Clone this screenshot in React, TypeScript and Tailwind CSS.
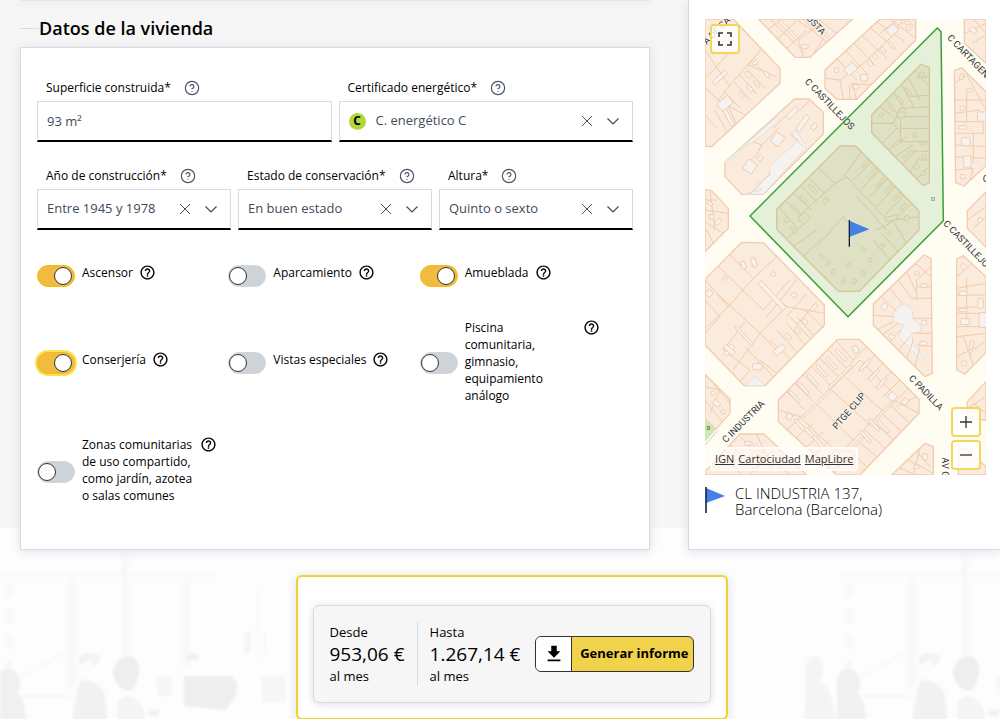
import React, { useState } from 'react';
import { HelpCircle } from 'lucide-react';
import { MdDownload, MdHelpOutline } from 'react-icons/md';
import clsx from 'clsx';

type Box = [number, number, number, number, number];

const toggles = [
  { id: 'ascensor', label: 'Ascensor', on: true },
  { id: 'aparcamiento', label: 'Aparcamiento', on: false },
  { id: 'amueblada', label: 'Amueblada', on: true },
  { id: 'conserjeria', label: 'Conserjería', on: true, active: true },
  { id: 'vistas', label: 'Vistas especiales', on: false },
  { id: 'piscina', label: 'Piscina comunitaria, gimnasio, equipamiento análogo', on: false, width: 'w-28' },
  { id: 'zonas', label: 'Zonas comunitarias de uso compartido, como jardín, azotea o salas comunes', on: false, width: 'w-28' },
];

// City blocks, drawn in map units (3 per pixel)
const blocks = [
  '45,57 130,57 270,205 270,250 65,440 45,440',
  '205,57 488,57 360,172 315,172',
  '405,210 570,57 677,57 677,120 500,298 440,298 405,265',
  '105,487 313,297 358,297 400,337 400,402 220,583 155,583 105,530',
  '545,345 693,193 718,202 718,548 700,557 545,398',
  '260,628 450,438 497,438 687,632 687,690 508,874 445,874 260,688',
  '823,57 888,57 888,190 823,130',
  '793,212 815,203 888,275 888,497 822,558 797,548',
  '888,575 832,632 832,685 888,742',
  '45,568 65,572 115,625 115,685 45,755',
  '45,838 155,727 220,728 403,915 403,975 225,1157 163,1157 45,1035',
  '265,1200 443,1018 507,1018 687,1198 687,1240 510,1425 440,1425 265,1265',
  '550,912 702,765 723,775 727,1120 705,1130 550,975',
  '800,777 820,767 888,830 888,1058 825,1122 800,1110',
  '45,1123 120,1198 120,1240 77,1288 45,1256',
  '45,1415 150,1302 222,1302 350,1425 45,1425',
  '605,1425 705,1330 730,1340 730,1425',
  '832,1205 888,1145 888,1260 832,1255',
  '805,1350 825,1345 888,1400 888,1425 805,1425',
];

const parcels = [
  // top left
  'M45 150L118 258L212 150M75 205L45 235M118 258L85 300L45 262M85 300L165 345M100 270L150 325M132 245L180 300M150 225L200 283M170 205L225 265M190 185L245 240M212 150L175 195L262 232M150 120L75 205M45 345L80 385M75 330L110 395M110 310L140 372',
  // top
  'M235 88L275 57M262 117L320 62M290 145L350 90M340 172L325 120L385 75M320 57L410 125M340 57L375 95M385 57L440 100M240 57L345 160M370 160L400 118',
  // north block
  'M440 175L500 240M465 150L535 225M490 128L560 200M515 105L590 175M540 82L620 150M560 65L645 125M405 235L450 240L460 298M450 240L520 190L600 115L640 57M480 298L478 255M500 298L485 250L540 255M600 57L677 115M570 100L625 57M650 57L677 85',
  // public building
  'M190 425L215 435L270 380M215 435L200 465L160 500M300 400L340 440M240 520L180 582M360 300L330 330M290 345L250 385',
  // triangular block inside the selected area
  'M570 320L610 350M590 300L625 345M612 278L645 330M635 255L670 318M655 235L690 300M675 213L718 260M718 230L680 232M718 285L660 290M718 320L630 325L610 370L545 370M718 350L632 350M632 385H718M632 350V425H718M610 370L632 400M718 455L660 452M575 430L620 385M595 450L650 410M615 470L670 435M637 492L680 450M660 515L690 470M680 537L718 500M718 480H690',
  // main selected block
  'M355 532L405 582M330 555L385 610M310 580L365 630M288 603L345 655M270 625L325 690M385 505L435 550L470 530L600 670L560 690M435 550L325 650M515 455L460 530M545 485L490 540M570 510L515 565M595 535L540 590M617 560L560 620M642 585L585 645M665 612L600 670M687 650L610 660M290 715L350 665M310 740L380 690M340 770L400 710M600 780L550 720M625 755L575 700M650 730L610 665M500 590L590 690M380 740L460 650L470 665',
  // right side
  'M850 57L888 100M823 100L888 70M845 130L888 105M793 250L830 225L888 330M793 300H888M793 340L870 330M793 365H880V400H793M793 435L888 440M793 470L888 475M793 510L850 505M850 505L840 540M830 270V365M850 400V490M832 660L888 620M850 685L888 650',
  // left
  'M45 600L80 600M45 630L115 640M60 572L75 690M45 665L100 700M70 730L50 690',
  // west block
  'M85 800L220 930L300 840M120 765L190 835L260 770M190 835L115 920L45 840M115 920L45 985M80 880L210 1000L130 1110M165 965L100 1050M210 1000L290 920L403 940M260 1050L210 1000M290 920L240 880M320 840L230 950M350 880L290 950M380 905L320 975M45 900L90 950L45 1000M210 1080L260 1120M260 990L320 1055M290 970L345 1035M240 1020L300 1075M165 1040L250 1130M320 950L370 1005M345 930L403 985M100 1050L180 1110L150 1145M360 1015L300 950',
  // passage block
  'M290 1175L345 1230M315 1150L370 1205M340 1125L395 1180M365 1100L420 1155M390 1075L445 1130M415 1050L470 1105M440 1025L490 1080M340 1250L510 1080L620 1190L450 1360M380 1212L490 1320M425 1170L540 1275M465 1130L580 1235M265 1230L330 1250L390 1310L450 1360M530 1040L480 1090M555 1065L505 1115M580 1090L530 1140M605 1115L555 1165M630 1140L580 1190M655 1165L600 1220M680 1190L620 1220M687 1240L610 1200M660 1270L600 1215M635 1295L575 1240M610 1320L550 1265M585 1345L525 1290M560 1370L500 1320M530 1400L470 1345M290 1290L345 1240M315 1315L370 1270M345 1345L400 1295M370 1370L420 1320M400 1395L440 1345M430 1420L470 1370',
  // south east blocks
  'M575 890L620 935M600 865L640 915M625 840L665 895M650 815L680 880M675 790L723 830M723 800L680 840V900M680 860H723M665 895H723M550 945L610 950M560 990L610 965M575 1005L625 970M600 1025L630 990M625 1050L660 1010M650 1075L670 1020M675 1100L690 1040M670 955H727M670 1000H727M680 1035L727 1040M800 830L845 790M800 865L888 850M800 885H888M800 925L860 920M800 940H888M800 980H888M800 1010L888 1000M830 830V980M820 1010L850 1095M800 1070L860 1040M888 1020L840 1060',
  // south blocks
  'M45 1160L90 1170L60 1240M70 1150L120 1210M45 1200L95 1265M95 1360L150 1420M120 1335L200 1415M150 1310L250 1410M200 1302L230 1370L180 1425M230 1370L300 1425M260 1340L200 1400M630 1405L680 1425M655 1380L730 1420M680 1355L720 1400M690 1345L670 1425M832 1225L888 1190M850 1210L888 1240',
];

const courts: Box[] = [
  [90, 232, 52, 12, -42], [112, 345, 12, 70, -28], [105, 310, 42, 28, -40],
  [196, 188, 18, 9, -40], [175, 225, 10, 22, -40], [200, 252, 8, 24, -40], [180, 265, 10, 22, -40], [230, 222, 10, 18, -40], [155, 285, 9, 20, -40],
  [280, 75, 34, 9, 45], [310, 105, 34, 9, 45], [345, 140, 18, 12, 0], [395, 90, 60, 7, 50],
  [607, 90, 30, 26, -40], [482, 207, 34, 26, -40], [522, 233, 20, 20, 0], [498, 260, 15, 13, 30], [555, 170, 10, 18, -40], [580, 150, 8, 20, -40], [605, 135, 8, 22, -40], [540, 190, 10, 18, -40], [655, 82, 10, 18, 0], [440, 210, 12, 14, 0], [640, 65, 12, 10, 0],
  [308, 338, 14, 42, 45], [338, 370, 15, 54, 35], [263, 418, 30, 34, 35], [180, 500, 32, 34, 35], [210, 475, 12, 16, 35], [372, 380, 14, 20, 35],
  [850, 90, 22, 14, 40], [827, 425, 26, 24, 0], [832, 485, 22, 34, 0], [815, 230, 10, 18, 20], [840, 270, 14, 9, 40], [818, 325, 15, 12, 0], [818, 382, 22, 10, 0], [818, 530, 14, 12, 0], [875, 350, 25, 28, 0],
  [247, 887, 14, 110, -43], [162, 1007, 8, 75, -43], [192, 787, 14, 28, -20], [160, 795, 14, 22, -20], [58, 880, 18, 18, 40], [118, 1050, 16, 36, 40], [118, 1050, 36, 14, 40], [202, 1100, 28, 18, 0], [268, 1050, 36, 18, -40], [312, 885, 14, 14, 30], [250, 822, 12, 12, 30], [105, 835, 12, 10, 30], [345, 965, 12, 18, -40], [372, 922, 10, 24, 40], [295, 1010, 10, 20, -40], [322, 992, 10, 20, -40],
  [313, 1190, 9, 45, -42], [340, 1165, 9, 45, -42], [368, 1140, 9, 45, -42], [395, 1113, 9, 45, -42], [425, 1090, 9, 45, -42], [453, 1065, 9, 45, -42],
  [380, 1210, 110, 7, -45], [450, 1130, 95, 7, -45], [525, 1095, 9, 42, 42], [552, 1125, 9, 42, 42], [575, 1150, 9, 42, 42], [607, 1190, 22, 22, 40],
  [575, 1240, 100, 7, -45], [580, 1280, 9, 45, -42], [553, 1275, 9, 45, -42], [527, 1310, 9, 45, -42], [330, 1275, 9, 45, -42], [360, 1300, 9, 45, -42], [385, 1325, 9, 45, -42], [495, 1335, 70, 7, -45], [645, 1205, 16, 18, 30], [497, 1048, 16, 22, -20], [298, 1250, 16, 18, 30],
  [702, 857, 18, 12, 0], [702, 968, 16, 14, 0], [700, 1030, 20, 12, 0], [605, 1010, 16, 14, 40], [583, 920, 16, 18, 40], [680, 820, 14, 9, 0], [820, 880, 24, 12, 0], [825, 965, 26, 18, 0], [878, 960, 22, 44, 0], [820, 800, 18, 12, 40], [820, 930, 24, 10, 0], [845, 1035, 10, 26, 20], [822, 1090, 14, 14, 0], [872, 910, 16, 30, 0],
  [80, 1210, 22, 14, 40], [70, 1180, 14, 10, 40], [100, 1235, 12, 12, 40], [175, 1330, 22, 10, 0], [205, 1345, 36, 8, 45], [140, 1360, 34, 8, -45], [255, 1385, 34, 8, -45], [705, 1370, 14, 18, 0], [680, 1400, 16, 10, 0],
  [65, 650, 14, 12, 0], [85, 665, 12, 20, 40], [60, 610, 16, 10, 40], [870, 660, 12, 14, 30],
];

// Courtyards of the blocks inside the selected area
const selectedCourts: Box[] = [
  [368, 567, 10, 32, -45], [342, 600, 8, 32, -45], [315, 628, 8, 32, -45], [407, 602, 14, 16, 40], [342, 655, 30, 26, -40], [290, 660, 12, 16, 40], [310, 690, 28, 8, 45],
  [525, 490, 8, 28, 45], [548, 520, 8, 36, 45], [570, 548, 8, 36, 45], [597, 565, 8, 32, 45], [620, 590, 8, 32, 45], [640, 620, 9, 26, 45], [605, 655, 36, 14, -15], [650, 655, 14, 16, 30],
  [695, 225, 12, 18, 20], [675, 405, 12, 12, 0], [700, 430, 18, 9, 0], [702, 470, 14, 10, 0], [680, 500, 14, 16, 30], [635, 345, 24, 18, 0], [605, 325, 8, 22, -40], [630, 300, 8, 26, -40], [655, 275, 8, 26, -40], [575, 345, 14, 10, -40], [620, 430, 8, 24, 45], [650, 465, 8, 24, 45], [700, 520, 12, 14, 0],
  [430, 815, 10, 14, 30], [460, 845, 10, 12, 30], [493, 845, 10, 14, 30], [475, 795, 10, 14, 30], [520, 820, 10, 14, 30], [540, 780, 10, 14, 30], [395, 770, 14, 8, 40], [575, 740, 10, 20, 45], [520, 750, 16, 10, 40], [600, 700, 12, 8, 40], [415, 790, 10, 14, 30],
];

function Court({ box }: { box: Box }) {
  const [x, y, w, h, angle] = box;
  return <rect x={x - w / 2} y={y - h / 2} width={w} height={h} rx="2" transform={`rotate(${angle} ${x} ${y})`} />;
}

function CityMap() {
  return (
    <svg viewBox="45 57 843 1368" preserveAspectRatio="xMidYMid slice" className="block h-[456px] w-full bg-[#fffdf2]" role="img" aria-label="Mapa">
      <g fill="#faebdc" stroke="#f0ccb0" strokeWidth="4" strokeLinejoin="round">
        {blocks.map((points) => <polygon key={points} points={points} />)}
      </g>
      <g fill="#f4f3f2" stroke="#dcd8d4" strokeWidth="2">
        <path d="M105 487L262 350L270 360L195 422L175 432L110 492Z" />
        <path d="M350 440L220 583H160L215 570L200 552L240 525V500L325 420L305 405L318 392Z" />
        <path d="M163 1157L195 1130L225 1157Z" />
        <path d="M610 935L640 910L665 925L670 960L690 975L695 995L665 1000L668 1030L700 1075L695 1083L625 1010L640 975L610 965Z" />
      </g>
      <path d="M45 1260L77 1290L45 1325Z" fill="#cfe5b4" />
      <path d="M45 1335L85 1290" stroke="#c9c9c9" strokeWidth="3" />
      <path d={parcels.join('')} fill="none" stroke="#f4cbab" strokeWidth="3" />
      <g fill="#f5f2f0" stroke="#efc6a6" strokeWidth="2.4">
        {courts.map((box, i) => <Court key={i} box={box} />)}
      </g>
      <g fill="#f7ead9" stroke="#eccfae" strokeWidth="2.4">
        {selectedCourts.map((box, i) => <Court key={i} box={box} />)}
      </g>
      <rect x="724" y="592" width="10" height="10" fill="#ddd" stroke="#aaa" strokeWidth="2" />
      <g fill="#2f3138" fontFamily="Roboto, 'Liberation Sans', sans-serif" fontSize="28" stroke="#fffdf2" strokeWidth="4" paintOrder="stroke">
        <text transform="translate(50 135) rotate(-45)">A DE CA</text>
        <text transform="translate(335 42) rotate(47)">COSTA</text>
        <text transform="translate(343 247) rotate(46)">C CASTILLEJOS</text>
        <text transform="translate(770 115) rotate(46)">C CARTAGENA</text>
        <text transform="translate(758 672) rotate(46)">C CASTILLEJOS</text>
        <text transform="translate(655 1136) rotate(46)">C PADILLA</text>
        <text transform="translate(440 1290) rotate(-49)">PTGE CLIP</text>
        <text transform="translate(108 1330) rotate(-45)">C INDUSTRIA</text>
        <text transform="translate(757 1372) rotate(90)">AV GAUDI</text>
        <text transform="translate(878 545)">C</text>
      </g>
      <text x="49" y="1290" fill="#3f7d3a" fontFamily="Roboto, sans-serif" fontSize="22">a</text>
      <polygon points="742,84 753,95 760,662 474,950 180,648" fill="#229922" fillOpacity=".12" stroke="#3a9e35" strokeWidth="4.5" strokeLinejoin="round" />
      <path d="M478 662L538 688L478 711Z" fill="#4480e8" />
      <path d="M478 660V740" stroke="#14233c" strokeWidth="4" />
    </svg>
  );
}

// Soft office photo behind the lower part of the page, repeated sideways
function OfficeBackdrop() {
  return (
    <div className="absolute inset-x-0 bottom-0 -z-10 h-48 overflow-hidden bg-[#fdfdfd]" aria-hidden="true">
      <svg className="h-48 w-full blur-[1px]">
        <defs>
          <g id="office">
            <path d="M0 47H215M70 60V175M258 60V130M186 55V140" stroke="#f9f9f9" strokeWidth="3" />
            <path d="M125 25V130M72 50V160M187 50V140" stroke="#f8f8f8" strokeWidth="7" />
            <path d="M9 55V150" stroke="#f8f8f8" strokeWidth="7" strokeDasharray="14 12" />
            <path d="M0 168H70M20 150L64 125M250 105V125M265 105V125" stroke="#f7f7f7" strokeWidth="2" />
            <path d="M-3 191V155Q-2 141 8 140Q20 142 20 156L18 166Q26 175 26 192Z" fill="#f0f0f0" />
            <path d="M-36 192L-34 160Q-38 130 -26 128Q-15 130 -17 145L-20 152Q-8 160 -4 192Z" fill="#f4f4f4" />
            <path d="M78 130Q82 124 92 125Q101 126 100 133L94 138L90 131L80 138Z" fill="#f3f3f3" />
            <path d="M72 192Q78 152 82 152Q94 150 104 164L108 192Z" fill="#f1f1f1" />
            <path d="M113 144Q116 128 130 128Q140 130 139 146Q136 158 132 162L124 162Q113 155 113 144Z" fill="#eeeeee" />
            <path d="M117 192L118 174Q130 160 144 180V192Z" fill="#f4f4f4" />
            <path d="M184 148H232L237 155L236 168L226 182L184 178Z" fill="#eeeeee" />
            <path d="M187 128Q192 122 198 128V132H188ZM148 182H160L158 188H150Z" fill="#f0f0f0" />
            <path d="M244 104H250V126H244ZM262 148H285V174H262ZM156 148H172V168H158Z" fill="#f6f6f6" />
          </g>
        </defs>
        <use href="#office" />
        <use href="#office" x="840" />
      </svg>
    </div>
  );
}

function FieldLabel({ id, children }: { id: string; children: React.ReactNode }) {
  return (
    <div className="flex h-5 items-center gap-[13px] pl-[9px]">
      <label htmlFor={id} className="text-[12px] leading-5 font-medium text-black">{children}</label>
      <button type="button" aria-label="Ayuda" className="text-[#4b5563]">
        <HelpCircle className="size-4" strokeWidth={1.75} />
      </button>
    </div>
  );
}

function SelectField({ id, label, options, badge }: { id: string; label: string; options: string[]; badge?: string }) {
  const [value, setValue] = useState(options[0]);

  return (
    <div className="flex flex-1 flex-col gap-[3px]">
      <FieldLabel id={id}>{label}</FieldLabel>
      <div className="flex h-[41px] items-center border border-b-2 border-[#d8dce2] border-b-black bg-white pr-[13px] pl-[9px] text-[#414b5a]">
        {badge && (
          <span className="mr-2.5 flex size-[17px] items-center justify-center rounded-full bg-[#b0d83c] text-[12px] leading-none font-bold text-black">{badge}</span>
        )}
        <select id={id} value={value} onChange={(e) => setValue(e.target.value)} className="min-w-0 flex-1 appearance-none bg-transparent text-[13px] outline-none">
          <option value="" />
          {options.map((o) => <option key={o}>{o}</option>)}
        </select>
        <button type="button" aria-label="Borrar" onClick={() => setValue('')} className="mr-3.5">
          <svg viewBox="0 0 12 12" className="size-3" fill="none" stroke="currentColor"><path d="M1 1L11 11M11 1L1 11" /></svg>
        </button>
        <svg viewBox="0 0 12 12" className="size-3" fill="none" stroke="currentColor" strokeWidth="1.2"><path d="M.5 3.5L6 9L11.5 3.5" /></svg>
      </div>
    </div>
  );
}

function Toggle({ id, label, on, active, width }: { id: string; label: string; on: boolean; active?: boolean; width?: string }) {
  const [checked, setChecked] = useState(on);

  return (
    <div className="flex items-center">
      <div className="flex shrink-0 pt-[3px]">
        <input
          id={id}
          type="checkbox"
          checked={checked}
          onChange={(e) => setChecked(e.target.checked)}
          className={clsx(
            'h-[22px] w-[38px] appearance-none rounded-full border border-[#d3d7dc] bg-[#ced3d8] outline-none',
            'before:mt-px before:block before:size-[18px] before:rounded-full before:border before:border-[#333] before:bg-white',
            'checked:border-[#f5b913] checked:bg-[#f1bb40] checked:before:translate-x-4',
            active && 'ring-2 ring-[#fde05a]'
          )}
        />
      </div>
      <div className="flex items-start gap-1.5 pl-[7px]">
        <label htmlFor={id} className={clsx('text-[12px] leading-[17px] font-medium text-black', width)}>{label}</label>
        <button type="button" aria-label="Ayuda" className="shrink-0 pb-1">
          <MdHelpOutline className="size-[17px]" />
        </button>
      </div>
    </div>
  );
}

function Price({ title, amount }: { title: string; amount: string }) {
  return (
    <div>
      <p className="text-[13px] leading-5">{title}</p>
      <p className="text-[19px] leading-6">{amount}</p>
      <p className="text-[13px] leading-5">al mes</p>
    </div>
  );
}

export default function App() {
  return (
    <main className="relative isolate min-h-screen overflow-hidden bg-[#f6f6f6] font-['Open_Sans','Noto_Sans',sans-serif] text-black">
      <OfficeBackdrop />

      <div className="flex gap-[38px] pl-5">
        <section className="flex min-w-0 flex-1 flex-col">
          <div className="h-px bg-[#e4e6ee] shadow-[0_2px_6px_#c5cbdd]" />
          <h2 className="mt-[15px] mb-[7px] flex items-center text-lg leading-6 font-semibold">
            <span className="h-px w-[19px] bg-[#dcdcdc]" />
            Datos de la vivienda
          </h2>

          <form className="flex-1 border border-[#d8dce0] bg-white px-4 pt-[30px] pb-11 shadow-[0_1px_10px_#dadfe9]">
            <div className="flex gap-[7px]">
              <div className="flex flex-1 flex-col gap-[3px]">
                <FieldLabel id="superficie">Superficie construida*</FieldLabel>
                <input id="superficie" defaultValue="93 m²" className="h-[41px] w-full border border-b-2 border-[#d8dce2] border-b-black bg-white px-[9px] text-[13px] text-[#414b5a] outline-none" />
              </div>
              <SelectField id="certificado" label="Certificado energético*" options={['C. energético C']} badge="C" />
            </div>
            <div className="mt-6 flex gap-[7px]">
              <SelectField id="anio" label="Año de construcción*" options={['Entre 1945 y 1978']} />
              <SelectField id="estado" label="Estado de conservación*" options={['En buen estado']} />
              <SelectField id="altura" label="Altura*" options={['Quinto o sexto']} />
            </div>
            <div className="mt-8 grid grid-cols-3 gap-y-8 pr-[22px]">
              {toggles.map((t) => <Toggle key={t.id} {...t} />)}
            </div>
          </form>
        </section>

        <aside className="w-[312px] shrink-0 border-b border-l border-[#d8dce0] bg-white pt-[19px] pr-3.5 pb-8 pl-4 shadow-[0_1px_10px_#dadfe9]">
          <div className="relative">
            <CityMap />
            <button type="button" aria-label="Pantalla completa" className="absolute top-[5px] left-[5px] flex size-[30px] items-center justify-center rounded-sm border-2 border-[#f3d65c] bg-white/80">
              <svg viewBox="0 0 14 14" className="size-3.5" fill="none" stroke="#333" strokeWidth="1.6"><path d="M1 5V1H5M9 1H13V5M13 9V13H9M5 13H1V9" /></svg>
            </button>
            <div className="absolute right-[5px] bottom-[5px] flex flex-col gap-[3px]">
              <button type="button" aria-label="Acercar" className="flex size-[30px] items-center justify-center rounded-sm border-2 border-[#f3d65c] bg-white/80">
                <svg viewBox="0 0 14 14" className="size-3.5" stroke="#333" strokeWidth="1.3"><path d="M7 1V13M1 7H13" /></svg>
              </button>
              <button type="button" aria-label="Alejar" className="flex size-[30px] items-center justify-center rounded-sm border-2 border-[#f3d65c] bg-white/80">
                <svg viewBox="0 0 14 14" className="size-3.5" stroke="#333" strokeWidth="1.3"><path d="M1 7H13" /></svg>
              </button>
            </div>
            <div className="absolute bottom-1 left-[5px] flex gap-1 rounded-sm border-2 border-white/80 bg-white/50 px-[3px] text-[11px] leading-5 text-[#333]">
              <a href="#ign" className="underline">IGN</a>
              <a href="#cartociudad" className="underline">Cartociudad</a>
              <a href="#maplibre" className="underline">MapLibre</a>
            </div>
          </div>
          <div className="flex gap-2.5 pt-2.5">
            <svg viewBox="0 0 20 28" className="mt-px h-7 w-5" aria-hidden="true">
              <path d="M1 2L20 10L1 17Z" fill="#4480e8" />
              <path d="M1 1V27" stroke="#14233c" strokeWidth="1.6" />
            </svg>
            <address className="text-[15px] leading-4 font-light text-black not-italic">
              CL INDUSTRIA 137,<br />Barcelona (Barcelona)
            </address>
          </div>
        </aside>
      </div>

      <div className="flex justify-center pt-[25px] pl-[23px]">
        <div className="w-[432px] rounded-md border-2 border-[#f2cf2c] bg-white px-[15px] pt-7 pb-[15px] shadow-[0_1px_8px_#d8dde8]">
          <div className="flex items-center rounded-md border border-[#d8dce0] bg-[#f6f6f6] p-4 shadow-[0_1px_8px_#d8dde8]">
            <div className="border-r border-[#d8dce0] pr-3">
              <Price title="Desde" amount="953,06 €" />
            </div>
            <div className="pl-3">
              <Price title="Hasta" amount="1.267,14 €" />
            </div>
            <button type="button" className="ml-auto flex h-9 items-stretch overflow-hidden rounded-md border border-[#333] bg-[#f0d24b] text-[13px] font-bold whitespace-nowrap">
              <span className="flex w-9 items-center justify-center border-r border-[#333] bg-white">
                <MdDownload className="size-[22px]" />
              </span>
              <span className="flex items-center pr-1 pl-2">Generar informe</span>
            </button>
          </div>
        </div>
      </div>
    </main>
  );
}
